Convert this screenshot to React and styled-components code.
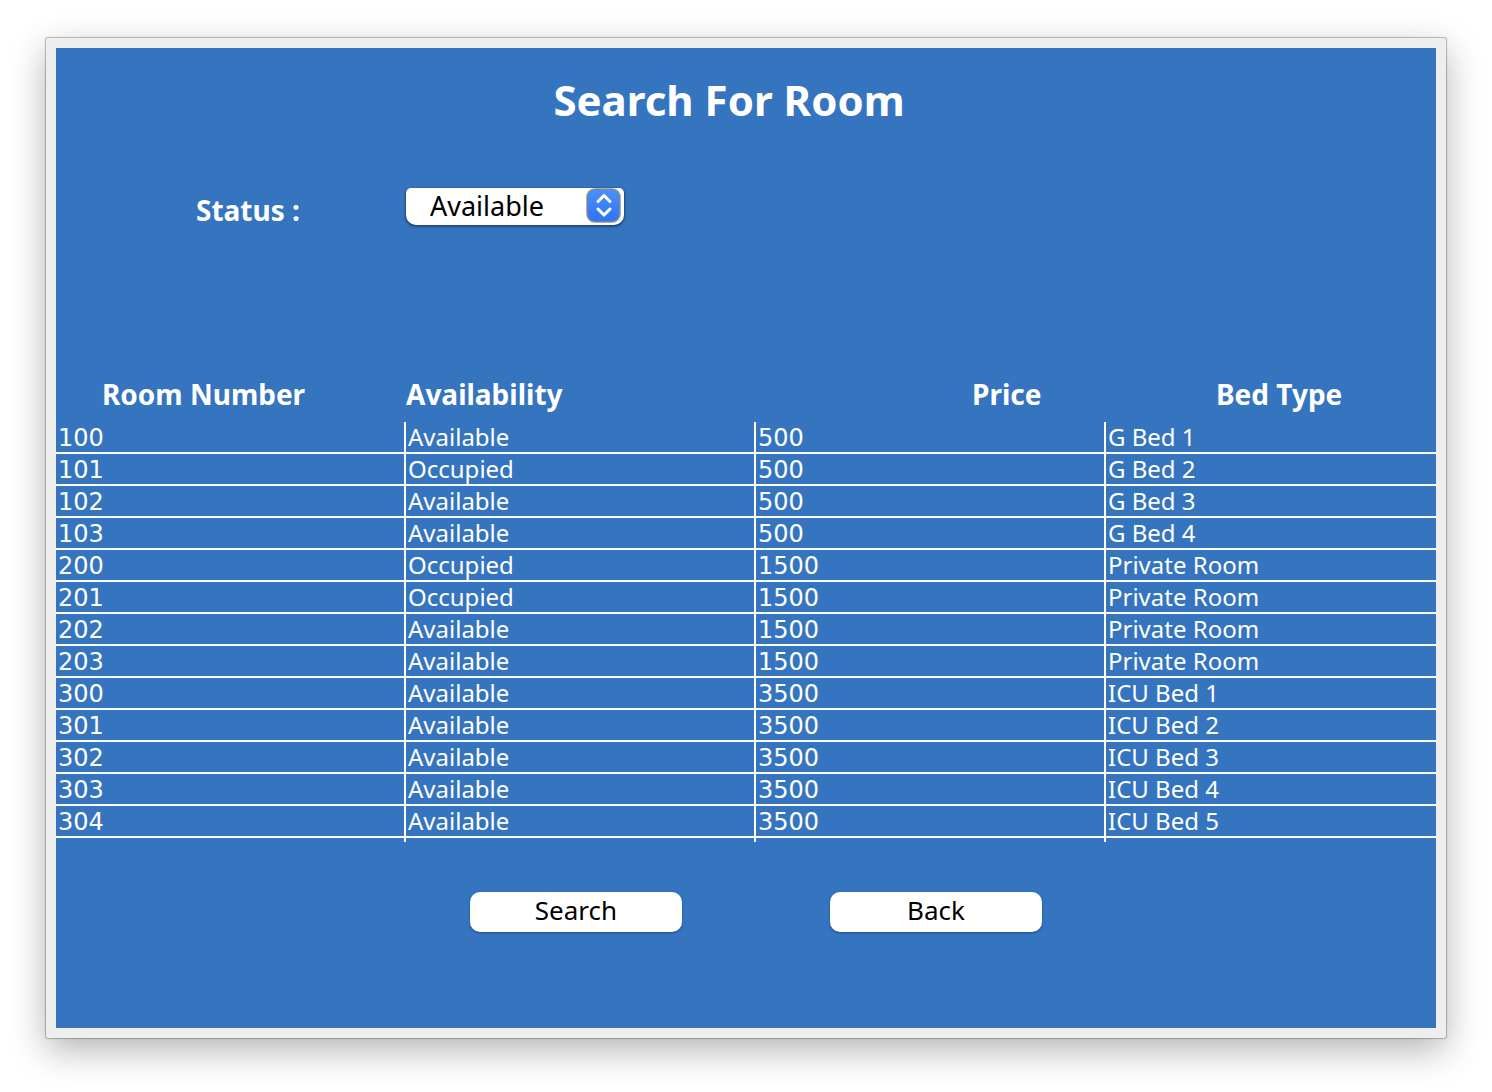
import React, { useState } from "react";
import styled, { createGlobalStyle } from "styled-components";

const GlobalStyle = createGlobalStyle`
  * { box-sizing: border-box; }
  body {
    margin: 0;
    background: #ffffff;
    color: #ffffff;
    font-family: "Noto Sans", "Open Sans", sans-serif;
  }
`;

const Page = styled.div`
  padding: 38px 46px 54px;
`;

const Frame = styled.main`
  padding: 10px;
  background: #eeeeee;
  border-radius: 2px;
  box-shadow: 0 0 1px 1px rgba(0, 0, 0, 0.26), 0 12px 36px 0 rgba(0, 0, 0, 0.3);
`;

const Panel = styled.div`
  display: flex;
  flex-direction: column;
  padding: 22px 0 96px;
  background: #3574bf;
`;

const Title = styled.h1`
  margin: 0;
  padding-right: 34px;
  font-size: 42px;
  line-height: 60px;
  font-weight: 700;
  text-align: center;
`;

const FilterRow = styled.div`
  display: grid;
  grid-template-columns: 210px 218px;
  align-items: start;
  margin-top: 58px;
  padding-left: 140px;
`;

const FilterLabel = styled.label`
  font-size: 28px;
  line-height: 44px;
  font-weight: 700;
`;

const SelectBox = styled.div`
  position: relative;
  height: 37px;
`;

const Select = styled.select`
  appearance: none;
  width: 100%;
  height: 100%;
  padding: 0 44px 2px 24px;
  border: 0;
  border-radius: 5px 5px 10px 10px;
  background: #ffffff;
  box-shadow: 0 1px 2px 1px rgba(20, 50, 90, 0.65);
  color: #000000;
  font-family: inherit;
  font-size: 27px;
  line-height: 34px;
`;

const Stepper = styled.svg`
  position: absolute;
  top: 0;
  right: 2px;
  pointer-events: none;
`;

const Table = styled.table`
  width: 100%;
  margin-top: 134px;
  border-collapse: separate;
  border-spacing: 0;
  table-layout: fixed;
`;

const Column = styled.col`
  width: ${({ $width }) => $width};
`;

const HeadCell = styled.th`
  height: 56px;
  padding: 0 0 0 ${({ $indent }) => $indent}px;
  font-size: 28px;
  line-height: 56px;
  font-weight: 700;
  text-align: left;
  white-space: nowrap;
`;

const Cell = styled.td`
  height: 32px;
  padding: 0 2px;
  border-bottom: 2px solid #ffffff;
  border-right: 2px solid #ffffff;
  font-family: ${({ $numeric }) =>
    $numeric ? '"DejaVu Sans", sans-serif' : "inherit"};
  font-size: 24px;
  line-height: ${({ $numeric }) => ($numeric ? 28 : 30)}px;
  vertical-align: ${({ $numeric }) => ($numeric ? "bottom" : "middle")};
  white-space: nowrap;

  &:last-child { border-right: 0; }
`;

const TailCell = styled.td`
  height: 4px;
  padding: 0;
  border-right: 2px solid #ffffff;

  &:last-child { border-right: 0; }
`;

const Actions = styled.div`
  display: flex;
  justify-content: center;
  gap: 148px;
  margin-top: 50px;
  padding-left: 20px;
`;

const Button = styled.button`
  width: 212px;
  height: 40px;
  padding: 0 0 4px;
  border: 0;
  border-radius: 10px;
  background: #ffffff;
  box-shadow: 0 1px 2px rgba(10, 40, 80, 0.5);
  color: #000000;
  font-family: inherit;
  font-size: 26px;
  line-height: 36px;
`;

const columns = [
  { label: "Room Number", indent: 46, width: "350px" },
  { label: "Availability", indent: 0, width: "350px" },
  { label: "Price", indent: 216, width: "350px" },
  { label: "Bed Type", indent: 110, width: "auto" },
];

const rooms = [
  ["100", "Available", "500", "G Bed 1"],
  ["101", "Occupied", "500", "G Bed 2"],
  ["102", "Available", "500", "G Bed 3"],
  ["103", "Available", "500", "G Bed 4"],
  ["200", "Occupied", "1500", "Private Room"],
  ["201", "Occupied", "1500", "Private Room"],
  ["202", "Available", "1500", "Private Room"],
  ["203", "Available", "1500", "Private Room"],
  ["300", "Available", "3500", "ICU Bed 1"],
  ["301", "Available", "3500", "ICU Bed 2"],
  ["302", "Available", "3500", "ICU Bed 3"],
  ["303", "Available", "3500", "ICU Bed 4"],
  ["304", "Available", "3500", "ICU Bed 5"],
];

function StepperIcon() {
  return (
    <Stepper width="36" height="36" viewBox="0 0 36 36" aria-hidden="true">
      <defs>
        <linearGradient id="stepper" x1="0" y1="0" x2="0" y2="1">
          <stop offset="0" stopColor="#4a90f8" />
          <stop offset="1" stopColor="#2f74f5" />
        </linearGradient>
      </defs>
      <rect x="0" y="0" width="35" height="35" rx="9" fill="#a9b0bb" />
      <rect x="1" y="1" width="33" height="33" rx="8" fill="#73859f" />
      <rect x="2" y="2" width="31" height="31" rx="7" fill="url(#stepper)" />
      <path
        d="M12 13.5 L18 7.5 L24 13.5 M12 21 L18 27 L24 21"
        fill="none"
        stroke="#ffffff"
        strokeWidth="3"
        strokeLinecap="round"
        strokeLinejoin="round"
      />
    </Stepper>
  );
}

export default function App() {
  const [status, setStatus] = useState("Available");
  const [query, setQuery] = useState(null);
  const shown = query ? rooms.filter((room) => room[1] === query) : rooms;

  return (
    <>
      <GlobalStyle />
      <Page>
        <Frame>
          <Panel>
            <Title>Search For Room</Title>
            <FilterRow>
              <FilterLabel htmlFor="status">Status :</FilterLabel>
              <SelectBox>
                <Select
                  id="status"
                  value={status}
                  onChange={(event) => setStatus(event.target.value)}
                >
                  <option>Available</option>
                  <option>Occupied</option>
                </Select>
                <StepperIcon />
              </SelectBox>
            </FilterRow>
            <Table>
              <colgroup>
                {columns.map((column) => (
                  <Column key={column.label} $width={column.width} />
                ))}
              </colgroup>
              <thead>
                <tr>
                  {columns.map((column) => (
                    <HeadCell key={column.label} scope="col" $indent={column.indent}>
                      {column.label}
                    </HeadCell>
                  ))}
                </tr>
              </thead>
              <tbody>
                {shown.map((room) => (
                  <tr key={room[0]}>
                    {room.map((value, index) => (
                      <Cell key={columns[index].label} $numeric={index % 2 === 0}>
                        {value}
                      </Cell>
                    ))}
                  </tr>
                ))}
                <tr aria-hidden="true">
                  {columns.map((column) => (
                    <TailCell key={column.label} />
                  ))}
                </tr>
              </tbody>
            </Table>
            <Actions>
              <Button type="button" onClick={() => setQuery(status)}>Search</Button>
              <Button type="button" onClick={() => setQuery(null)}>Back</Button>
            </Actions>
          </Panel>
        </Frame>
      </Page>
    </>
  );
}
